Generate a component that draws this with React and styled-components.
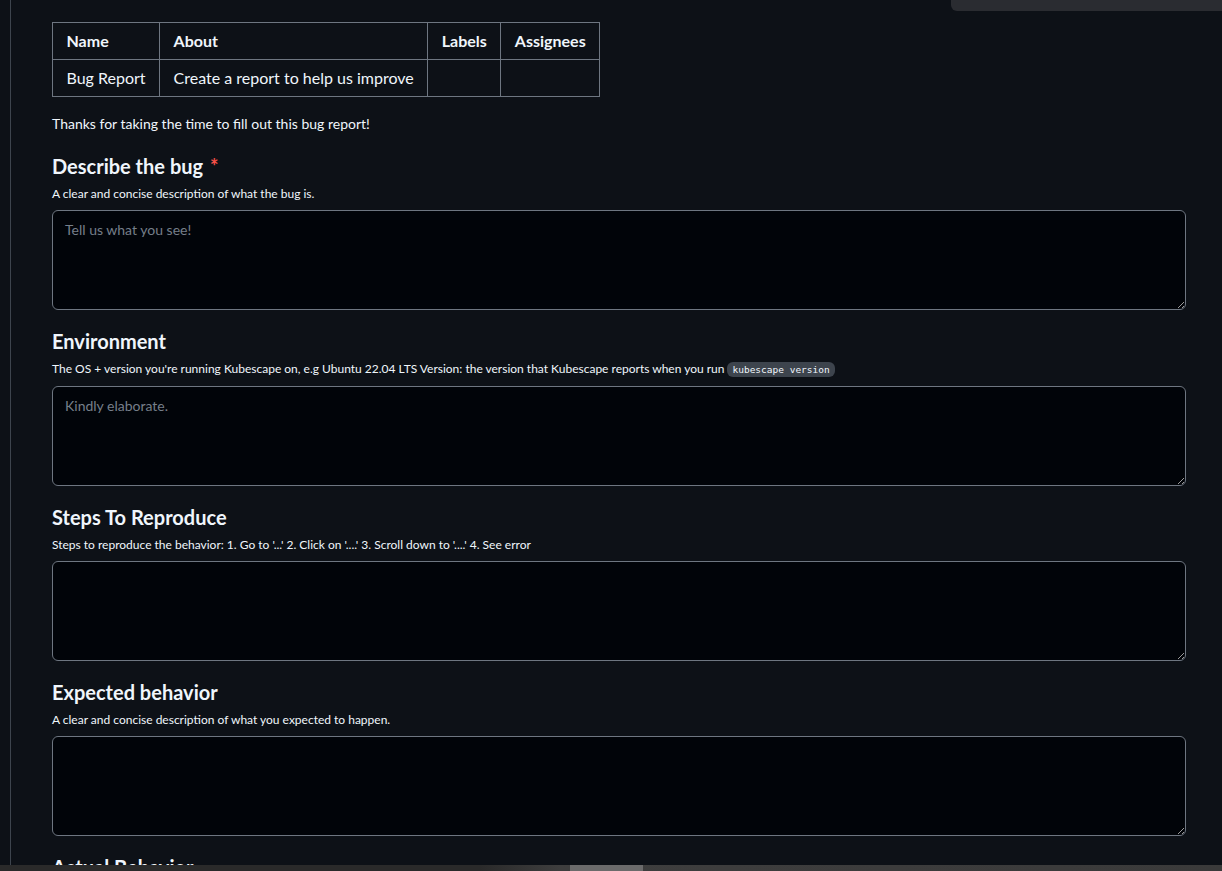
import React from "react";
import styled, { createGlobalStyle } from "styled-components";

const Global = createGlobalStyle`
  html, body { margin: 0; padding: 0; background: #0d1117; }
  body { font-family: Lato, "Open Sans", sans-serif; color: #f0f6fc; color-scheme: dark; overflow: hidden; }
`;

const Screen = styled.div`
  position: relative;
  height: 871px;
  display: flex;
  flex-direction: column;
  background: #0d1117;
`;

const Viewport = styled.div`
  flex: 1;
  overflow: hidden;
  padding-left: 10px;
`;

const Content = styled.div`
  border-left: 1px solid #3d444d;
  padding: 22px 36px 0 41px;
  min-height: 100%;
  box-sizing: border-box;
`;

const TopPanel = styled.div`
  position: absolute;
  top: 0;
  right: 0;
  width: 271px;
  height: 11px;
  background: #2a2c31;
  border-bottom-left-radius: 6px;
`;

const HScroll = styled.div`
  height: 6px;
  background: linear-gradient(90deg, #2a2a2a 0, #2a2a2a 480px, #3e3e3e 560px, #3a3a3a 100%);
  position: relative;
`;

const Thumb = styled.div`
  position: absolute;
  left: 570px;
  width: 73px;
  top: 0;
  bottom: 0;
  background: #6b6b6b;
`;

const Table = styled.table`
  border-collapse: collapse;
  font-size: 16px;
  line-height: 24px;
  margin-bottom: 17px;
`;

const Th = styled.th`
  border: 1px solid #6e7681;
  padding: 6px 13.5px;
  font-weight: 700;
  text-align: left;
  height: 24px;
`;

const Td = styled.td`
  border: 1px solid #6e7681;
  padding: 6px 13.5px;
  height: 24px;
`;

const Intro = styled.p`
  margin: 0 0 17px;
  font-size: 14px;
  line-height: 20px;
`;

const Section = styled.section`
  display: flex;
  flex-direction: column;
  padding-bottom: 16px;
`;

const Heading = styled.h3`
  margin: 0;
  height: 30px;
  font-size: 20px;
  line-height: 30px;
  font-weight: 700;
  display: flex;
  align-items: baseline;
`;

const Required = styled.span`
  color: #f85149;
  margin-left: 7px;
  font-size: 20px;
`;

const Desc = styled.p`
  margin: 4px 0 0;
  font-size: 12px;
  line-height: 18px;
`;

const Code = styled.code`
  font-family: "DejaVu Sans Mono", "Liberation Mono", monospace;
  font-size: 9.5px;
  background: #3d444d;
  border-radius: 6px;
  padding: 2px 5px;
  margin-left: 3px;
`;

const Area = styled.textarea`
  margin-top: 7px;
  height: 100px;
  box-sizing: border-box;
  width: 100%;
  background: #010409;
  border: 1px solid #6e7681;
  border-radius: 6px;
  color: #f0f6fc;
  font-family: Lato, "Open Sans", sans-serif;
  font-size: 14px;
  line-height: 20px;
  padding: 9px 12px;
  resize: vertical;
  outline: none;
  &::placeholder { color: #767f8a; }
`;

const sections = [
  { title: "Describe the bug", required: true, desc: "A clear and concise description of what the bug is.", placeholder: "Tell us what you see!" },
  {
    title: "Environment",
    desc: (
      <>
        The OS + version you're running Kubescape on, e.g Ubuntu 22.04 LTS Version: the version that Kubescape reports when you run
        <Code>kubescape version</Code>
      </>
    ),
    placeholder: "Kindly elaborate.",
  },
  { title: "Steps To Reproduce", desc: "Steps to reproduce the behavior: 1. Go to '...' 2. Click on '....' 3. Scroll down to '....' 4. See error" },
  { title: "Expected behavior", desc: "A clear and concise description of what you expected to happen." },
  { title: "Actual Behavior", desc: "A clear and concise description of what happens instead." },
];

export default function App() {
  return (
    <Screen>
      <Global />
      <Viewport>
        <Content>
          <Table>
            <thead>
              <tr>
                <Th>Name</Th>
                <Th>About</Th>
                <Th>Labels</Th>
                <Th>Assignees</Th>
              </tr>
            </thead>
            <tbody>
              <tr>
                <Td>Bug Report</Td>
                <Td>Create a report to help us improve</Td>
                <Td></Td>
                <Td></Td>
              </tr>
            </tbody>
          </Table>
          <Intro>Thanks for taking the time to fill out this bug report!</Intro>
          {sections.map((s) => (
            <Section key={s.title}>
              <Heading>
                {s.title}
                {s.required && <Required>*</Required>}
              </Heading>
              <Desc>{s.desc}</Desc>
              <Area placeholder={s.placeholder || ""} />
            </Section>
          ))}
        </Content>
      </Viewport>
      <HScroll>
        <Thumb />
      </HScroll>
      <TopPanel />
    </Screen>
  );
}
